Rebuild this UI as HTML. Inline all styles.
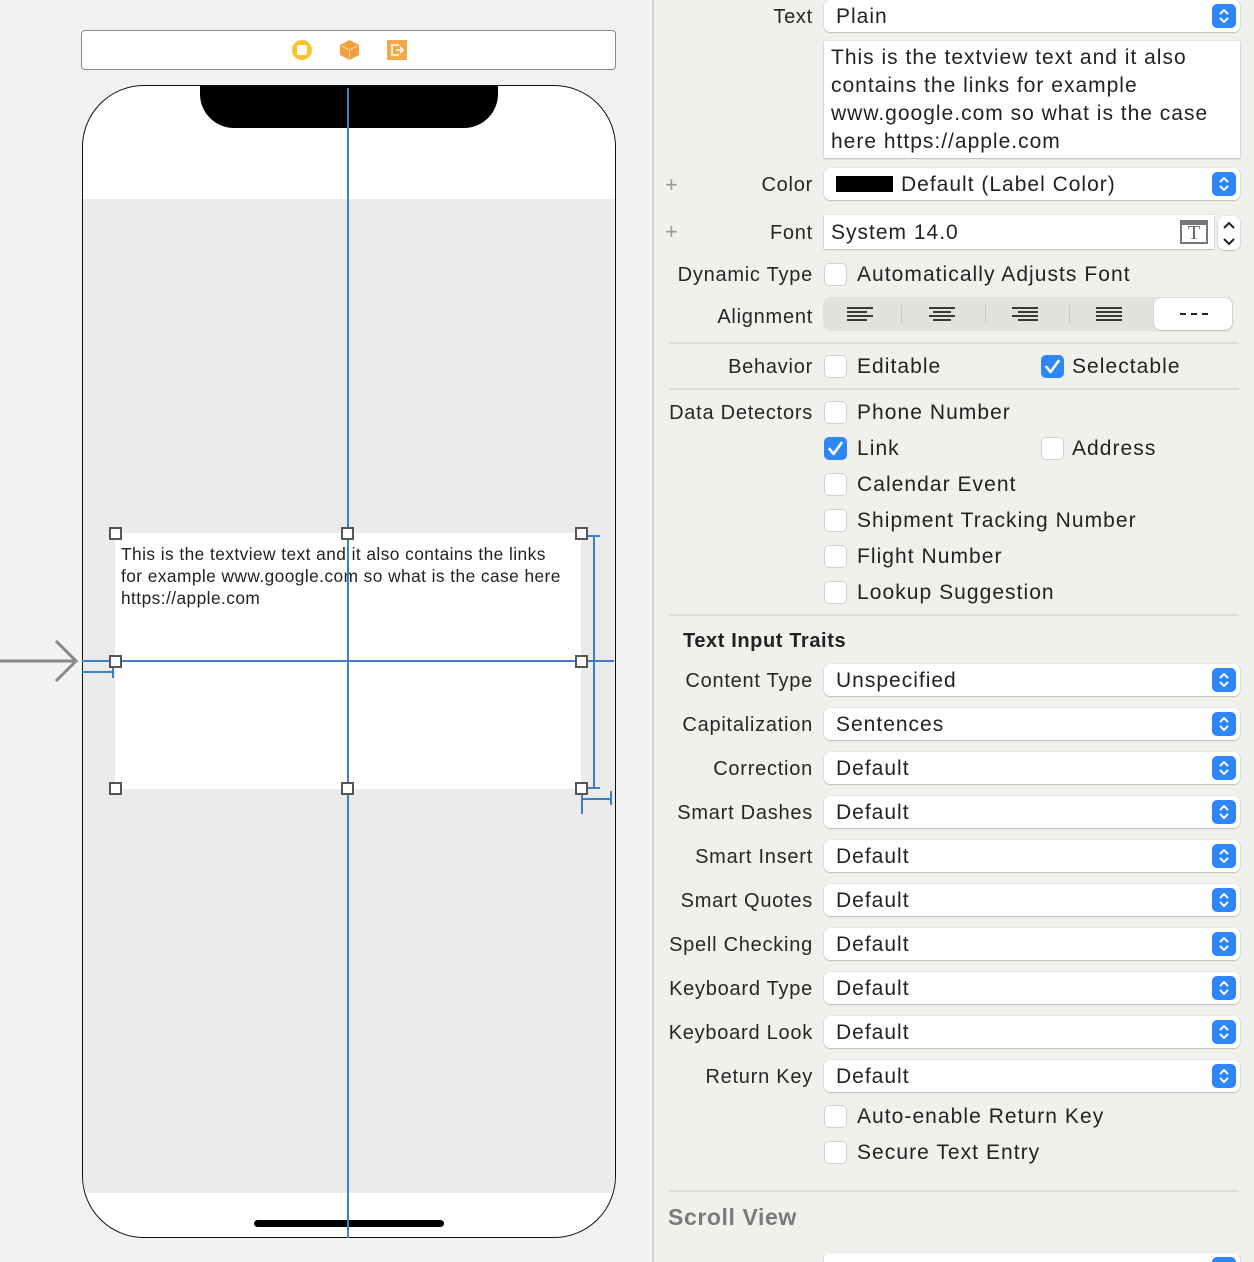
<!DOCTYPE html>
<html style="width:1254px;height:1262px;overflow:hidden"><head><meta charset="utf-8"><style>
*{margin:0;padding:0;box-sizing:border-box}
body{width:1254px;height:1262px;overflow:hidden;position:relative;background:#f2f2f2;font-family:"Liberation Sans",sans-serif;color:#222}
.a{position:absolute}
#right{position:absolute;left:654px;top:0;width:600px;height:1262px;background:#f0f0ec}
#div{position:absolute;left:652px;top:0;width:2px;height:1262px;background:#d2d2d2}
.lbl{position:absolute;right:441px;font-size:20px;line-height:24px;text-align:right;white-space:nowrap;color:#262626;letter-spacing:0.75px}
.pop{position:absolute;left:824px;width:416px;height:32px;background:#fff;border-radius:6px;box-shadow:0 0.5px 1.5px rgba(0,0,0,.35);font-size:21px;line-height:34px;padding-left:12px;color:#222;letter-spacing:1px}
.pop .b{position:absolute;right:4px;top:4px;width:24px;height:24px;border-radius:5px;background:#2f86f6}
.cb{position:absolute;left:824px;width:23px;height:23px;border-radius:5px;background:#fff;box-shadow:0 0 0 1px #d0d0d0 inset}
.cb.on{background:#2f86f6;box-shadow:none}
.ct{position:absolute;font-size:21px;line-height:24px;white-space:nowrap;color:#222;letter-spacing:1.05px}
.sep{position:absolute;left:669px;width:570px;height:2px;background:#dcdcd8}
.h{position:absolute;width:13px;height:13px;border:2px solid #555;background:#fff}
</style></head><body>
<div id="right"></div><div id="div"></div>

<!-- top bar -->
<div class="a" style="left:81px;top:30px;width:535px;height:40px;border:1.5px solid #8a8a8a;border-radius:4px;background:#fff"></div>
<div class="a" style="left:292px;top:40px;width:20px;height:20px;border-radius:50%;background:#fbc22e"></div>
<div class="a" style="left:297px;top:45px;width:10px;height:10px;border-radius:2px;background:#fff"></div>
<svg class="a" style="left:339px;top:39px" width="21" height="22"><polygon points="10.5,1 20,6 20,16 10.5,21 1,16 1,6" fill="#f3a03c"/><path d="M3 7l7.5 4 7.5-4M10.5 11v9" stroke="#fcd9a8" stroke-width="1" fill="none"/></svg>
<div class="a" style="left:387px;top:40px;width:20px;height:20px;background:#f5a847"></div>
<svg class="a" style="left:387px;top:40px" width="20" height="20"><path d="M12 5H5v10h7M9 10h7M13 7l3 3-3 3" stroke="#fff" stroke-width="1.6" fill="none"/></svg>

<!-- phone -->
<div class="a" style="left:82px;top:85px;width:534px;height:1153px;border:1.5px solid #111;border-radius:62px;background:#fff;overflow:hidden">
  <div class="a" style="left:0;top:113px;width:534px;height:994px;background:#ebebeb"></div>
  <div class="a" style="left:117px;top:-2px;width:298px;height:44px;background:#000;border-radius:0 0 34px 34px"></div>
  <div class="a" style="left:171px;top:1134px;width:190px;height:7px;background:#000;border-radius:4px"></div>
</div>
<div class="a" style="left:115px;top:533px;width:466px;height:256px;background:#fff"></div>
<div class="a" style="left:121px;top:543px;width:458px;font-size:17.3px;line-height:22px;color:#222;letter-spacing:0.45px">This is the textview text and it also contains the links<br>for example www.google.com so what is the case here<br>https://apple.com</div>
<div class="a" style="left:347px;top:88px;width:2px;height:1150px;background:#3d7fc4"></div>
<div class="a" style="left:82px;top:660px;width:532px;height:2px;background:#3d7fc4"></div>
<div class="a" style="left:593px;top:536px;width:2px;height:252px;background:#3d7fc4"></div>
<div class="a" style="left:586px;top:535px;width:14px;height:2px;background:#3d7fc4"></div>
<div class="a" style="left:586px;top:787px;width:14px;height:2px;background:#3d7fc4"></div>
<div class="a" style="left:82px;top:671px;width:32px;height:2px;background:#3d7fc4"></div>
<div class="a" style="left:112px;top:664px;width:2px;height:14px;background:#3d7fc4"></div>
<div class="a" style="left:582px;top:798px;width:30px;height:2px;background:#3d7fc4"></div>
<div class="a" style="left:610px;top:791px;width:2px;height:14px;background:#3d7fc4"></div>
<div class="a" style="left:581px;top:790px;width:2px;height:24px;background:#3d7fc4"></div>
<div class="h" style="left:109px;top:527px"></div><div class="h" style="left:341px;top:527px"></div><div class="h" style="left:575px;top:527px"></div>
<div class="h" style="left:109px;top:655px"></div><div class="h" style="left:575px;top:655px"></div>
<div class="h" style="left:109px;top:782px"></div><div class="h" style="left:341px;top:782px"></div><div class="h" style="left:575px;top:782px"></div>
<svg class="a" style="left:0;top:638px" width="82" height="46"><path d="M0 23H77M56 3l20 20-20 20" stroke="#888" stroke-width="3" fill="none"/></svg>

<!-- inspector -->
<div class="lbl" style="top:5px">Text</div>
<div class="pop" style="top:0px">Plain<div class="b"><svg width="24" height="24"><path d="M8 10l4-4 4 4M8 14l4 4 4-4" stroke="#fff" stroke-width="2" fill="none"/></svg></div></div>
<div class="a" style="left:824px;top:41px;width:416px;height:117px;background:#fff;box-shadow:0 0.5px 1.5px rgba(0,0,0,.35);font-size:21px;line-height:28px;padding:3px 7px;color:#222;letter-spacing:1px">This is the textview text and it also contains the links for example www.google.com so what is the case here https://apple.com</div>

<div class="a" style="left:665px;top:172px;font-size:22px;color:#999">+</div>
<div class="lbl" style="top:173px">Color</div>
<div class="pop" style="top:168px"><span style="display:inline-block;width:57px;height:16px;background:#000;vertical-align:-1px;margin-right:8px"></span>Default (Label Color)<div class="b"><svg width="24" height="24"><path d="M8 10l4-4 4 4M8 14l4 4 4-4" stroke="#fff" stroke-width="2" fill="none"/></svg></div></div>

<div class="a" style="left:665px;top:219px;font-size:22px;color:#999">+</div>
<div class="lbl" style="top:221px">Font</div>
<div class="a" style="left:824px;top:215px;width:390px;height:34px;background:#fff;box-shadow:0 0.5px 1.5px rgba(0,0,0,.35);font-size:21px;line-height:36px;padding-left:7px;letter-spacing:1px">System 14.0</div>
<div class="a" style="left:1180px;top:220px;width:28px;height:24px;border:2px solid #777;border-top-width:5px;font-family:'Liberation Serif',serif;font-size:20px;line-height:17px;text-align:center;color:#666">T</div>
<div class="a" style="left:1218px;top:216px;width:22px;height:34px;background:#fff;border-radius:6px;box-shadow:0 0.5px 1.5px rgba(0,0,0,.35)"></div>
<svg class="a" style="left:1218px;top:216px" width="22" height="34"><path d="M6 12l5-5 5 5M6 23l5 5 5-5" stroke="#222" stroke-width="2" fill="none"/></svg>

<div class="lbl" style="top:263px">Dynamic Type</div>
<div class="cb" style="top:263px"></div><div class="ct" style="left:857px;top:263px">Automatically Adjusts Font</div>

<div class="lbl" style="top:305px">Alignment</div>
<div class="a" style="left:823px;top:297px;width:410px;height:34px;background:#e2e2de;border-radius:7px"></div>
<div class="a" style="left:1154px;top:298px;width:78px;height:32px;background:#fff;border-radius:7px;box-shadow:0 0.5px 1.5px rgba(0,0,0,.3)"></div>
<div class="a" style="left:1180px;top:313px;width:28px;height:2px;border-top:2px dashed #222"></div>
<div class="a" style="left:901px;top:305px;width:1px;height:18px;background:#c8c8c4"></div>
<div class="a" style="left:985px;top:305px;width:1px;height:18px;background:#c8c8c4"></div>
<div class="a" style="left:1069px;top:305px;width:1px;height:18px;background:#c8c8c4"></div>
<svg class="a" style="left:823px;top:297px" width="330" height="34">
<g stroke="#222" stroke-width="1.8"><path d="M24 11h26M24 15h20M24 19h26M24 23h20"/><path d="M106 11h26M110 15h18M106 19h26M110 23h18"/><path d="M189 11h26M195 15h20M189 19h26M195 23h20"/><path d="M273 11h26M273 15h26M273 19h26M273 23h26"/></g></svg>

<div class="sep" style="top:342px"></div>
<div class="lbl" style="top:355px">Behavior</div>
<div class="cb" style="top:355px"></div><div class="ct" style="left:857px;top:355px">Editable</div>
<div class="cb on" style="left:1041px;top:355px"><svg width="23" height="23"><path d="M5.5 12l4 5 8-11" stroke="#fff" stroke-width="2.6" fill="none" stroke-linecap="round" stroke-linejoin="round"/></svg></div><div class="ct" style="left:1072px;top:355px">Selectable</div>
<div class="sep" style="top:388px"></div>

<div class="lbl" style="top:401px">Data Detectors</div>
<div class="cb" style="top:401px"></div><div class="ct" style="left:857px;top:401px">Phone Number</div>
<div class="cb on" style="top:437px"><svg width="23" height="23"><path d="M5.5 12l4 5 8-11" stroke="#fff" stroke-width="2.6" fill="none" stroke-linecap="round" stroke-linejoin="round"/></svg></div><div class="ct" style="left:857px;top:437px">Link</div>
<div class="cb" style="left:1041px;top:437px"></div><div class="ct" style="left:1072px;top:437px">Address</div>
<div class="cb" style="top:473px"></div><div class="ct" style="left:857px;top:473px">Calendar Event</div>
<div class="cb" style="top:509px"></div><div class="ct" style="left:857px;top:509px">Shipment Tracking Number</div>
<div class="cb" style="top:545px"></div><div class="ct" style="left:857px;top:545px">Flight Number</div>
<div class="cb" style="top:581px"></div><div class="ct" style="left:857px;top:581px">Lookup Suggestion</div>
<div class="sep" style="top:614px"></div>

<div class="a" style="left:683px;top:630px;font-size:20px;font-weight:bold;color:#222;letter-spacing:0.6px">Text Input Traits</div>
<div class="lbl" style="top:669px">Content Type</div><div class="pop" style="top:664px">Unspecified<div class="b"><svg width="24" height="24"><path d="M8 10l4-4 4 4M8 14l4 4 4-4" stroke="#fff" stroke-width="2" fill="none"/></svg></div></div>
<div class="lbl" style="top:713px">Capitalization</div><div class="pop" style="top:708px">Sentences<div class="b"><svg width="24" height="24"><path d="M8 10l4-4 4 4M8 14l4 4 4-4" stroke="#fff" stroke-width="2" fill="none"/></svg></div></div>
<div class="lbl" style="top:757px">Correction</div><div class="pop" style="top:752px">Default<div class="b"><svg width="24" height="24"><path d="M8 10l4-4 4 4M8 14l4 4 4-4" stroke="#fff" stroke-width="2" fill="none"/></svg></div></div>
<div class="lbl" style="top:801px">Smart Dashes</div><div class="pop" style="top:796px">Default<div class="b"><svg width="24" height="24"><path d="M8 10l4-4 4 4M8 14l4 4 4-4" stroke="#fff" stroke-width="2" fill="none"/></svg></div></div>
<div class="lbl" style="top:845px">Smart Insert</div><div class="pop" style="top:840px">Default<div class="b"><svg width="24" height="24"><path d="M8 10l4-4 4 4M8 14l4 4 4-4" stroke="#fff" stroke-width="2" fill="none"/></svg></div></div>
<div class="lbl" style="top:889px">Smart Quotes</div><div class="pop" style="top:884px">Default<div class="b"><svg width="24" height="24"><path d="M8 10l4-4 4 4M8 14l4 4 4-4" stroke="#fff" stroke-width="2" fill="none"/></svg></div></div>
<div class="lbl" style="top:933px">Spell Checking</div><div class="pop" style="top:928px">Default<div class="b"><svg width="24" height="24"><path d="M8 10l4-4 4 4M8 14l4 4 4-4" stroke="#fff" stroke-width="2" fill="none"/></svg></div></div>
<div class="lbl" style="top:977px">Keyboard Type</div><div class="pop" style="top:972px">Default<div class="b"><svg width="24" height="24"><path d="M8 10l4-4 4 4M8 14l4 4 4-4" stroke="#fff" stroke-width="2" fill="none"/></svg></div></div>
<div class="lbl" style="top:1021px">Keyboard Look</div><div class="pop" style="top:1016px">Default<div class="b"><svg width="24" height="24"><path d="M8 10l4-4 4 4M8 14l4 4 4-4" stroke="#fff" stroke-width="2" fill="none"/></svg></div></div>
<div class="lbl" style="top:1065px">Return Key</div><div class="pop" style="top:1060px">Default<div class="b"><svg width="24" height="24"><path d="M8 10l4-4 4 4M8 14l4 4 4-4" stroke="#fff" stroke-width="2" fill="none"/></svg></div></div>
<div class="cb" style="top:1105px"></div><div class="ct" style="left:857px;top:1105px">Auto-enable Return Key</div>
<div class="cb" style="top:1141px"></div><div class="ct" style="left:857px;top:1141px">Secure Text Entry</div>
<div class="sep" style="top:1190px"></div>
<div class="a" style="left:668px;top:1204px;font-size:23px;font-weight:bold;color:#7a7a7a;letter-spacing:0.6px">Scroll View</div>
<div class="pop" style="top:1253px"><div class="b"></div></div>
</body></html>
